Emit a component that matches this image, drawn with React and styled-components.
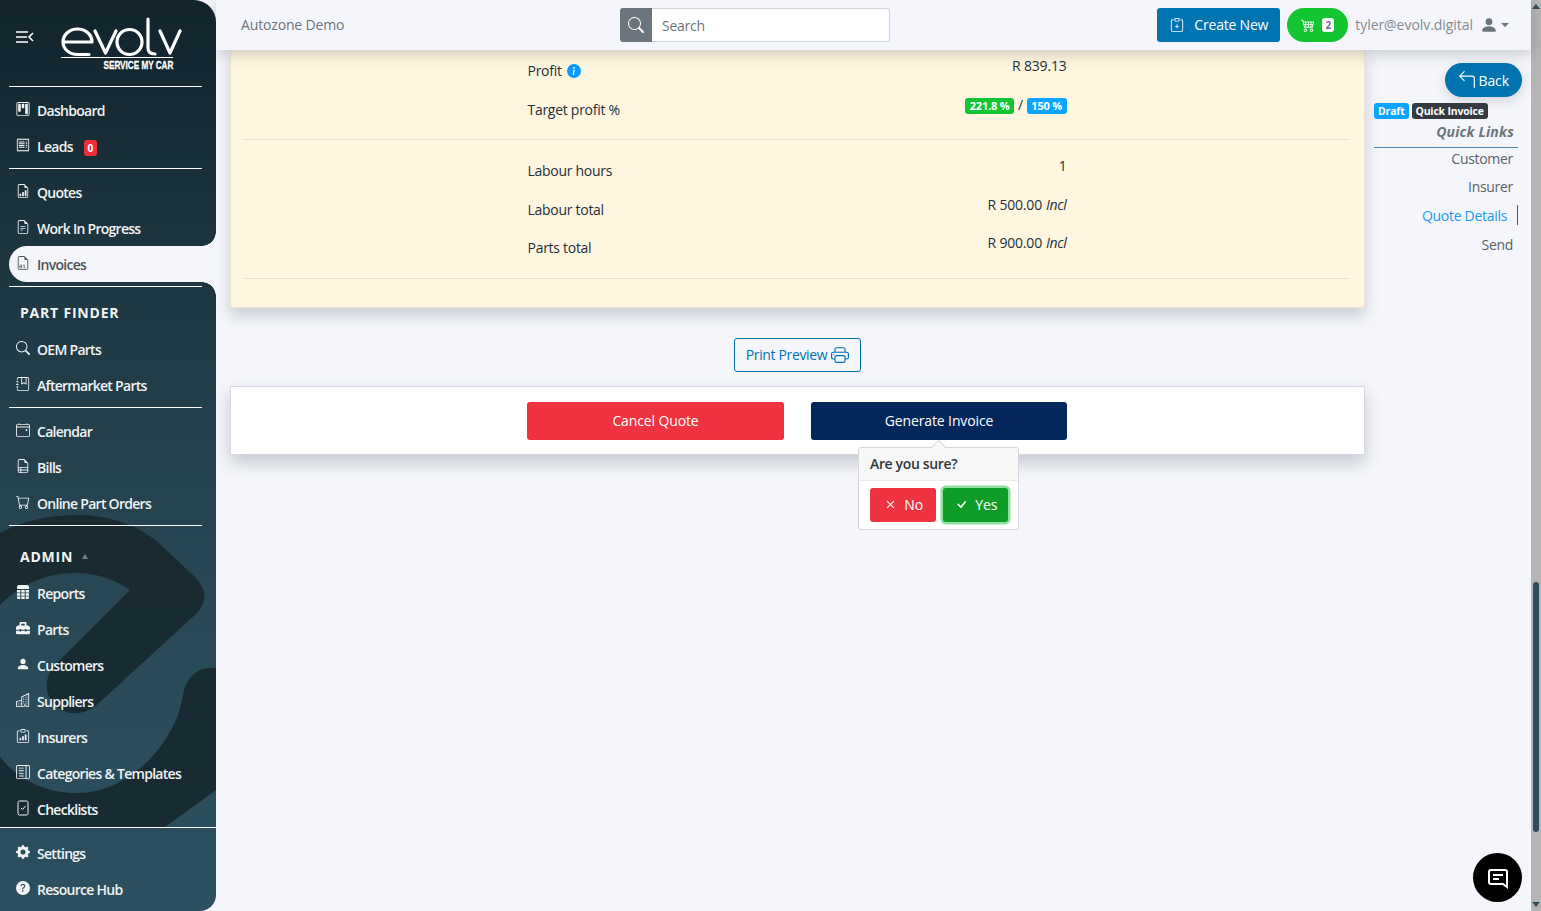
import React from "react";
import styled, { createGlobalStyle } from "styled-components";
import {
  BsKanban,
  BsReceipt,
  BsFileEarmarkBarGraph,
  BsFileEarmarkText,
  BsFileEarmarkBinary,
  BsSearch,
  BsJournalBookmark,
  BsCalendar4Event,
  BsFileEarmarkRuled,
  BsCart,
  BsPersonFill,
  BsBuildings,
  BsClipboardData,
  BsLayoutTextSidebar,
  BsGearFill,
  BsQuestionCircleFill,
  BsClipboardPlus,
  BsCart4,
  BsInfoCircleFill,
  BsPrinter,
  BsArrow90DegLeft,
  BsX,
  BsCheck,
} from "react-icons/bs";
import { FaToolbox } from "react-icons/fa";

const pageBg = "#f4f6fb";
const font = `"Open Sans", "Noto Sans", sans-serif`;

const GlobalStyle = createGlobalStyle`
  html, body {
    margin: 0;
    height: 100%;
    overflow: hidden;
    background: ${pageBg};
    font-family: ${font};
    font-size: 14px;
    letter-spacing: -0.25px;
  }
  * { box-sizing: border-box; }
`;

const MenuIcon = () => (
  <svg width="18" height="14" viewBox="0 0 18 14" fill="none" stroke="#fff" strokeWidth="1.6">
    <path d="M0 2h12M0 7h11M0 12h12M17 3l-4 4 4 4" />
  </svg>
);

const ReportsIcon = () => (
  <svg width="12" height="14" viewBox="0 0 12 14" fill="currentColor">
    <path d="M2 0h8a2 2 0 0 1 2 2v2H0V2a2 2 0 0 1 2-2z" />
    <path d="M0 5h3.300v2.500H0zM4.300 5h3.400v2.500H4.300zM8.700 5H12v2.500H8.700zM0 8.200h3.300v2.500H0zM4.300 8.200h3.400v2.500H4.300zM8.700 8.200H12v2.500H8.700zM0 11.400h3.300V14H1.500A1.500 1.500 0 0 1 0 12.500zM4.300 11.400h3.400V14H4.300zM8.700 11.400H12v1.100a1.500 1.500 0 0 1-1.500 1.500H8.700z" />
  </svg>
);

const ChecklistIcon = () => (
  <svg width="14" height="16" viewBox="0 0 14 16" fill="none" stroke="currentColor" strokeWidth="1">
    <rect x="2" y="1" width="10" height="14" rx="1.5" />
    <path d="M5 8l1.5 1.5L9.5 6" />
  </svg>
);

const ChatIcon = () => (
  <svg width="22" height="22" viewBox="0 0 22 22" fill="none" stroke="#fff" strokeWidth="2">
    <path d="M4 3h14a2 2 0 0 1 2 2v15l-4-3H4a2 2 0 0 1-2-2V5a2 2 0 0 1 2-2z" />
    <path d="M6 8h10M6 12h6" />
  </svg>
);

const EvolvMark = () => (
  <svg width="122" height="40" viewBox="60 17 122 40" fill="none" stroke="#fff" strokeWidth="3.2" strokeLinecap="round" strokeLinejoin="round">
    <path d="M63 42H92A14.5 13 0 0 0 63 42A14.5 12.500 0 0 0 77.500 54.500H89" />
    <path d="M95 31L105.500 53L116 31" />
    <ellipse cx="129.500" cy="42" rx="12.500" ry="12.500" />
    <path d="M148 19V48Q148 54 155 54" />
    <path d="M160 31L170 53L180 31" />
  </svg>
);

const nav = {
  main: [
    { label: "Dashboard", icon: <BsKanban /> },
    { label: "Leads", icon: <BsReceipt />, badge: "0" },
  ],
  work: [
    { label: "Quotes", icon: <BsFileEarmarkBarGraph /> },
    { label: "Work In Progress", icon: <BsFileEarmarkText /> },
    { label: "Invoices", icon: <BsFileEarmarkBinary />, active: true },
  ],
  finder: [
    { label: "OEM Parts", icon: <BsSearch /> },
    { label: "Aftermarket Parts", icon: <BsJournalBookmark /> },
  ],
  other: [
    { label: "Calendar", icon: <BsCalendar4Event /> },
    { label: "Bills", icon: <BsFileEarmarkRuled /> },
    { label: "Online Part Orders", icon: <BsCart /> },
  ],
  admin: [
    { label: "Reports", icon: <ReportsIcon /> },
    { label: "Parts", icon: <FaToolbox /> },
    { label: "Customers", icon: <BsPersonFill /> },
    { label: "Suppliers", icon: <BsBuildings /> },
    { label: "Insurers", icon: <BsClipboardData /> },
    { label: "Categories & Templates", icon: <BsLayoutTextSidebar /> },
    { label: "Checklists", icon: <ChecklistIcon /> },
  ],
  footer: [
    { label: "Settings", icon: <BsGearFill /> },
    { label: "Resource Hub", icon: <BsQuestionCircleFill /> },
  ],
};

const quickLinks = [
  { label: "Customer" },
  { label: "Insurer" },
  { label: "Quote Details", active: true },
  { label: "Send" },
];

const NavList = ({ items }) =>
  items.map((item) => (
    <NavItem key={item.label} $active={item.active}>
      <NavIcon>{item.icon}</NavIcon>
      {item.label}
      {item.badge && <NavBadge>{item.badge}</NavBadge>}
    </NavItem>
  ));

const App = () => {
  return (
    <Page>
      <GlobalStyle />
      <Sidebar>
        <SidebarArt viewBox="0 0 216 911" width="216" height="911">
          <path d="M0 533C25 520 50 515 78 515C110 515 140 526 160 544L196 578C207 590 207 602 197 613L100 702C84 718 62 716 52 702C44 690 45 676 55 665L130 590C112 578 95 573 75 573C45 573 20 585 0 605Z" />
          <path d="M0 757C20 782 48 793 77 793C120 793 160 760 178 715C184 698 182 688 190 678C196 670 206 667 216 668V790L165 827H0Z" />
        </SidebarArt>
        <Brand>
          <MenuIcon />
          <Logo>
            <EvolvMark />
            <LogoTag>
              <span>SERVICE MY CAR</span>
            </LogoTag>
          </Logo>
        </Brand>
        <Divider />
        <NavList items={nav.main} />
        <Divider />
        <NavList items={nav.work} />
        <Divider />
        <SectionTitle $top={15}>PART FINDER</SectionTitle>
        <NavList items={nav.finder} />
        <Divider />
        <NavList items={nav.other} />
        <Divider />
        <SectionTitle $top={20}>
          ADMIN
          <Caret />
        </SectionTitle>
        <NavList items={nav.admin} />
        <Divider $full />
        <NavList items={nav.footer} />
      </Sidebar>

      <Main>
        <Header>
          <CompanyName>Autozone Demo</CompanyName>
          <SearchGroup>
            <SearchAddon>
              <BsSearch />
            </SearchAddon>
            <SearchInput>Search</SearchInput>
          </SearchGroup>
          <HeaderActions>
            <CreateButton>
              <BsClipboardPlus />
              Create New
            </CreateButton>
            <CartPill>
              <BsCart4 />
              <CartCount>2</CartCount>
            </CartPill>
            <UserMenu>
              tyler@evolv.digital
              <UserIcon>
                <BsPersonFill />
              </UserIcon>
              <DownCaret />
            </UserMenu>
          </HeaderActions>
        </Header>

        <Body>
          <Column>
            <SummaryCard>
              <Rows>
                <Row>
                  <RowLabel>
                    Profit <InfoDot><BsInfoCircleFill /></InfoDot>
                  </RowLabel>
                  <RowValue>R 839.13</RowValue>
                </Row>
                <Row>
                  <RowLabel>Target profit %</RowLabel>
                  <RowValue>
                    <Pill $color="#12c531">221.8 %</Pill> / <Pill $color="#0ba5ff">150 %</Pill>
                  </RowValue>
                </Row>
              </Rows>
              <Rule />
              <Rows>
                <Row>
                  <RowLabel>Labour hours</RowLabel>
                  <RowValue>1</RowValue>
                </Row>
                <Row>
                  <RowLabel>Labour total</RowLabel>
                  <RowValue>
                    R 500.00 <em>Incl</em>
                  </RowValue>
                </Row>
                <Row>
                  <RowLabel>Parts total</RowLabel>
                  <RowValue>
                    R 900.00 <em>Incl</em>
                  </RowValue>
                </Row>
              </Rows>
              <Rule />
            </SummaryCard>

            <PrintRow>
              <PrintButton>
                Print Preview
                <BsPrinter />
              </PrintButton>
            </PrintRow>

            <ActionCard>
              <ActionGrid>
                <ActionButton $color="#ef3340">Cancel Quote</ActionButton>
                <ConfirmWrap>
                  <ActionButton $color="#03275b">Generate Invoice</ActionButton>
                  <Popover>
                    <PopoverTitle>Are you sure?</PopoverTitle>
                    <PopoverBody>
                      <PopButton $color="#ef3340">
                        <BsX />
                        No
                      </PopButton>
                      <PopButton $color="#0f9d2a" $focus>
                        <BsCheck />
                        Yes
                      </PopButton>
                    </PopoverBody>
                  </Popover>
                </ConfirmWrap>
              </ActionGrid>
            </ActionCard>
          </Column>

          <SidePanel>
            <BackButton>
              <BsArrow90DegLeft />
              Back
            </BackButton>
            <TagRow>
              <Tag $color="#0ba5ff">Draft</Tag>
              <Tag $color="#343a40">Quick Invoice</Tag>
            </TagRow>
            <QuickTitle>Quick Links</QuickTitle>
            <QuickList>
              {quickLinks.map((link) => (
                <QuickLink key={link.label} $active={link.active}>
                  {link.label}
                </QuickLink>
              ))}
            </QuickList>
          </SidePanel>
        </Body>
      </Main>

      <Scrollbar>
        <ScrollArrow />
        <ScrollThumb />
        <ScrollArrow $down />
      </Scrollbar>

      <ChatButton>
        <ChatIcon />
      </ChatButton>
    </Page>
  );
};

export default App;

const Page = styled.div`
  display: flex;
  height: 911px;
  overflow: hidden;
  background: ${pageBg};
`;

const Sidebar = styled.aside`
  position: relative;
  z-index: 3;
  flex: 0 0 216px;
  height: 911px;
  border-radius: 0 22px 16px 0;
  background: linear-gradient(180deg, #12232b 0%, #1f3a45 35%, #284855 65%, #2c5061 100%);
`;

const SidebarArt = styled.svg`
  position: absolute;
  top: 0;
  left: 0;
  fill: #18292f;
  opacity: 0.92;
`;

const Brand = styled.div`
  position: relative;
  display: flex;
  align-items: flex-start;
  height: 86px;
  padding: 30px 0 0 16px;
`;

const Logo = styled.div`
  display: flex;
  flex-direction: column;
  width: 122px;
  margin: -13px 0 0 26px;
`;

const LogoTag = styled.div`
  display: flex;
  justify-content: flex-end;
  width: 112px;
  height: 13px;
  margin-left: 1px;
  border-top: 1.5px solid #fff;

  span {
    margin-top: 2px;
    font-family: "Liberation Sans", sans-serif;
    font-size: 11px;
    line-height: 11px;
    font-weight: 700;
    letter-spacing: 0;
    color: #fff;
    -webkit-text-stroke: 0.3px #fff;
    transform: scaleX(0.74);
    transform-origin: right center;
    white-space: nowrap;
  }
`;

const Divider = styled.div`
  position: relative;
  height: 1px;
  width: ${(p) => (p.$full ? "216px" : "193px")};
  margin: ${(p) => (p.$full ? "-1px 0 8px 0" : "3px 0 6px 9px")};
  background: #fff;

  &:nth-of-type(2) {
    margin-top: 0;
  }
`;

const NavItem = styled.div`
  position: relative;
  display: flex;
  align-items: center;
  height: 36px;
  margin-left: ${(p) => (p.$active ? "9px" : "0")};
  padding-left: ${(p) => (p.$active ? "7px" : "16px")};
  padding-bottom: ${(p) => (p.$active ? "0" : "2px")};
  font-size: 14px;
  font-weight: 600;
  letter-spacing: -0.72px;
  color: ${(p) => (p.$active ? "#4c5358" : "#f1f4f5")};
  background: ${(p) => (p.$active ? pageBg : "transparent")};
  border-radius: ${(p) => (p.$active ? "18px 0 0 18px" : "0")};
  top: ${(p) => (p.$active ? "-1px" : "0")};

  ${(p) =>
    p.$active &&
    `
    &::before,
    &::after {
      content: "";
      position: absolute;
      right: 0;
      width: 14px;
      height: 14px;
    }
    &::before {
      top: -14px;
      background: radial-gradient(circle at 0 0, transparent 13.5px, ${pageBg} 14px);
    }
    &::after {
      bottom: -14px;
      background: radial-gradient(circle at 0 100%, transparent 13.5px, ${pageBg} 14px);
    }
  `}
`;

const NavIcon = styled.span`
  display: flex;
  align-items: center;
  justify-content: center;
  width: 14px;
  height: 16px;
  margin-right: 7px;
  margin-top: -2px;
  font-size: 14px;
  flex: none;
`;

const NavBadge = styled.span`
  margin: 3px 0 0 11px;
  width: 13px;
  height: 16px;
  border-radius: 3px;
  background: #ef2d38;
  color: #fff;
  font-size: 10px;
  font-weight: 700;
  line-height: 16px;
  text-align: center;
  letter-spacing: 0;
`;

const SectionTitle = styled.div`
  position: relative;
  display: flex;
  align-items: center;
  height: 20px;
  margin: ${(p) => p.$top}px 0 10px 20px;
  font-size: 14px;
  font-weight: 700;
  letter-spacing: 0.8px;
  color: #f1f4f5;
`;

const Caret = styled.span`
  width: 0;
  height: 0;
  margin-left: 9px;
  border-left: 3px solid transparent;
  border-right: 3px solid transparent;
  border-bottom: 5px solid #6f7f86;
`;

const Main = styled.div`
  flex: 1;
  min-width: 0;
  display: flex;
  flex-direction: column;
`;

const Header = styled.header`
  position: relative;
  z-index: 2;
  display: flex;
  align-items: center;
  flex: 0 0 50px;
  padding: 0 22px 0 25px;
  background: ${pageBg};
  box-shadow: 0 4px 14px rgba(40, 45, 60, 0.22);
`;

const CompanyName = styled.div`
  width: 379px;
  padding-bottom: 1px;
  color: #6c757d;
  letter-spacing: -0.15px;
`;

const SearchGroup = styled.div`
  display: flex;
  width: 270px;
  height: 34px;
`;

const SearchAddon = styled.div`
  display: flex;
  align-items: center;
  justify-content: center;
  width: 32px;
  border-radius: 3px 0 0 3px;
  background: #6c757d;
  color: #fff;
  font-size: 16px;
`;

const SearchInput = styled.div`
  flex: 1;
  display: flex;
  align-items: center;
  padding-left: 10px;
  border: 1px solid #ced4da;
  border-left: 0;
  border-radius: 0 3px 3px 0;
  background: #fff;
  color: #6c757d;
`;

const HeaderActions = styled.div`
  display: flex;
  align-items: center;
  margin-left: auto;
`;

const CreateButton = styled.div`
  display: flex;
  align-items: center;
  gap: 10px;
  height: 34px;
  padding: 0 12px 1px 13px;
  border-radius: 3px;
  background: #0073b1;
  color: #fff;
  letter-spacing: -0.2px;
`;

const CartPill = styled.div`
  display: flex;
  align-items: center;
  justify-content: center;
  gap: 7px;
  width: 61px;
  height: 34px;
  margin-left: 7px;
  border-radius: 17px;
  background: #12c531;
  color: #fff;
  font-size: 14px;
`;

const CartCount = styled.span`
  width: 12px;
  height: 14px;
  border-radius: 3px;
  background: #fff;
  color: #6c757d;
  font-size: 10px;
  font-weight: 700;
  line-height: 14px;
  text-align: center;
  letter-spacing: 0;
`;

const UserMenu = styled.div`
  display: flex;
  align-items: center;
  margin-left: 7px;
  padding-bottom: 1px;
  color: #858b90;
  letter-spacing: -0.05px;
`;

const UserIcon = styled.span`
  display: flex;
  margin-left: 7px;
  color: #6c757d;
  font-size: 18px;
`;

const DownCaret = styled.span`
  width: 0;
  height: 0;
  margin-left: 3px;
  border-left: 4px solid transparent;
  border-right: 4px solid transparent;
  border-top: 4px solid #6c757d;
`;

const Body = styled.div`
  flex: 1;
  display: flex;
  min-height: 0;
`;

const Column = styled.div`
  flex: 0 0 1149px;
  padding-left: 14px;
`;

const SummaryCard = styled.section`
  height: 258px;
  padding: 6px 15px 0 13px;
  border: 1px solid #eee6d2;
  border-top: 0;
  border-radius: 0 0 3px 3px;
  background: #fff6df;
  box-shadow: 0 8px 16px rgba(40, 45, 60, 0.2);
`;

const Rows = styled.div`
  width: 540px;
  margin: 0 auto;
`;

const Row = styled.div`
  display: flex;
  justify-content: space-between;
  height: 38.5px;
  color: #25303a;
  line-height: 20px;
`;

const RowLabel = styled.div`
  display: flex;
  align-items: center;
  align-self: flex-start;
  gap: 5px;
  margin: 5px 0 0 1px;
  letter-spacing: -0.28px;
`;

const InfoDot = styled.span`
  display: flex;
  color: #0b9bff;
`;

const RowValue = styled.div`
  display: flex;
  align-items: center;
  align-self: flex-start;
  gap: 4px;
  letter-spacing: -0.2px;

  em {
    letter-spacing: -0.3px;
  }
`;

const Pill = styled.span`
  height: 16px;
  margin-top: 2px;
  padding: 0 4.500px;
  border-radius: 3px;
  background: ${(p) => p.$color};
  color: #fff;
  font-size: 11px;
  font-weight: 700;
  line-height: 16px;
`;

const Rule = styled.div`
  height: 1px;
  margin: 6px 0 16px;
  background: #e6dfcc;
`;

const PrintRow = styled.div`
  display: flex;
  justify-content: center;
  margin-top: 30px;
`;

const PrintButton = styled.div`
  display: flex;
  align-items: center;
  gap: 4px;
  height: 34px;
  padding: 0 11px 1px;
  border: 1px solid #0073b1;
  border-radius: 3px;
  color: #0073b1;
  letter-spacing: -0.36px;

  svg {
    font-size: 18px;
  }
`;

const ActionCard = styled.section`
  height: 69px;
  margin-top: 14px;
  padding: 15px 1px 0 0;
  border: 1px solid #d8dae3;
  background: #fff;
  box-shadow: 0 8px 16px rgba(40, 45, 60, 0.22);
`;

const ActionGrid = styled.div`
  display: grid;
  grid-template-columns: 257px 256px;
  justify-content: center;
  gap: 27px;
`;

const ConfirmWrap = styled.div`
  position: relative;
`;

const ActionButton = styled.div`
  height: 38px;
  border-radius: 3px;
  background: ${(p) => p.$color};
  color: #fff;
  line-height: 38px;
  text-align: center;
  letter-spacing: -0.12px;
`;

const Popover = styled.div`
  position: absolute;
  top: 45px;
  left: 47px;
  z-index: 1;
  width: 161px;
  height: 83px;
  border: 1px solid #d5d6d9;
  border-radius: 3px;
  background: #fff;

  &::before {
    content: "";
    position: absolute;
    top: -6px;
    left: 74px;
    width: 10px;
    height: 10px;
    border-left: 1px solid #d5d6d9;
    border-top: 1px solid #d5d6d9;
    background: #f7f7f7;
    transform: rotate(45deg);
  }
`;

const PopoverTitle = styled.div`
  position: relative;
  height: 33px;
  padding-left: 11px;
  border-bottom: 1px solid #ececec;
  border-radius: 3px 3px 0 0;
  background: #f7f7f7;
  color: #33383d;
  font-weight: 600;
  line-height: 32px;
  letter-spacing: -0.35px;
`;

const PopoverBody = styled.div`
  display: flex;
  gap: 7px;
  padding: 7px 10px 0 11px;
`;

const PopButton = styled.div`
  display: flex;
  align-items: center;
  justify-content: center;
  gap: 5px;
  flex: 1;
  height: 34px;
  padding-bottom: 1px;
  border-radius: 3px;
  background: ${(p) => p.$color};
  color: #fff;
  letter-spacing: -0.1px;
  box-shadow: ${(p) => (p.$focus ? "0 0 0 2.500px #8fe09f" : "none")};

  svg {
    font-size: 17px;
  }
`;

const SidePanel = styled.aside`
  flex: 1;
  min-width: 0;
  display: flex;
  flex-direction: column;
  align-items: stretch;
  padding: 13px 13px 0 9px;
`;

const BackButton = styled.div`
  display: flex;
  align-items: center;
  gap: 3px;
  align-self: flex-end;
  height: 34px;
  margin-right: -4px;
  padding: 0 13px;
  border-radius: 17px;
  background: #0073b1;
  color: #fff;
  letter-spacing: -0.1px;
  box-shadow: 0 4px 12px rgba(40, 45, 60, 0.16);

  svg {
    font-size: 18px;
  }
`;

const TagRow = styled.div`
  display: flex;
  gap: 3px;
  margin-top: 6px;
`;

const Tag = styled.span`
  height: 16px;
  padding: 0 4px;
  border-radius: 3px;
  background: ${(p) => p.$color};
  color: #fff;
  font-size: 10.500px;
  font-weight: 700;
  line-height: 16px;
  letter-spacing: -0.2px;
`;

const QuickTitle = styled.div`
  margin-top: 3px;
  padding: 0 4px 5px 0;
  border-bottom: 1px solid #4d87b8;
  color: #6c757d;
  font-weight: 700;
  font-style: italic;
  line-height: 20px;
  text-align: right;
  letter-spacing: 0.2px;
`;

const QuickList = styled.div`
  display: flex;
  flex-direction: column;
`;

const QuickLink = styled.div`
  display: flex;
  align-items: center;
  justify-content: flex-end;
  height: 20px;
  margin-top: 8.7px;
  padding-right: ${(p) => (p.$active ? "10px" : "4px")};
  border-right: ${(p) => (p.$active ? "1px solid #0073b1" : "1px solid transparent")};
  color: ${(p) => (p.$active ? "#2196f3" : "#5b6167")};
  letter-spacing: -0.3px;

  &:first-child {
    margin-top: 0;
  }
`;

const Scrollbar = styled.div`
  position: relative;
  flex: 0 0 10px;
  display: flex;
  flex-direction: column;
  align-items: center;
  justify-content: space-between;
  padding: 4px 0;
  background: #b5b5b5;
`;

const ScrollArrow = styled.span`
  width: 0;
  height: 0;
  border-left: 4px solid transparent;
  border-right: 4px solid transparent;
  border-${(p) => (p.$down ? "top" : "bottom")}: 5px solid #2b4f60;
`;

const ScrollThumb = styled.span`
  position: absolute;
  top: 582px;
  left: 2px;
  width: 6px;
  height: 250px;
  border-radius: 3px;
  background: #2b4f60;
`;

const ChatButton = styled.div`
  position: absolute;
  left: 1473px;
  top: 853px;
  z-index: 4;
  display: flex;
  align-items: center;
  justify-content: center;
  width: 49px;
  height: 49px;
  border-radius: 50%;
  background: #000;
`;
